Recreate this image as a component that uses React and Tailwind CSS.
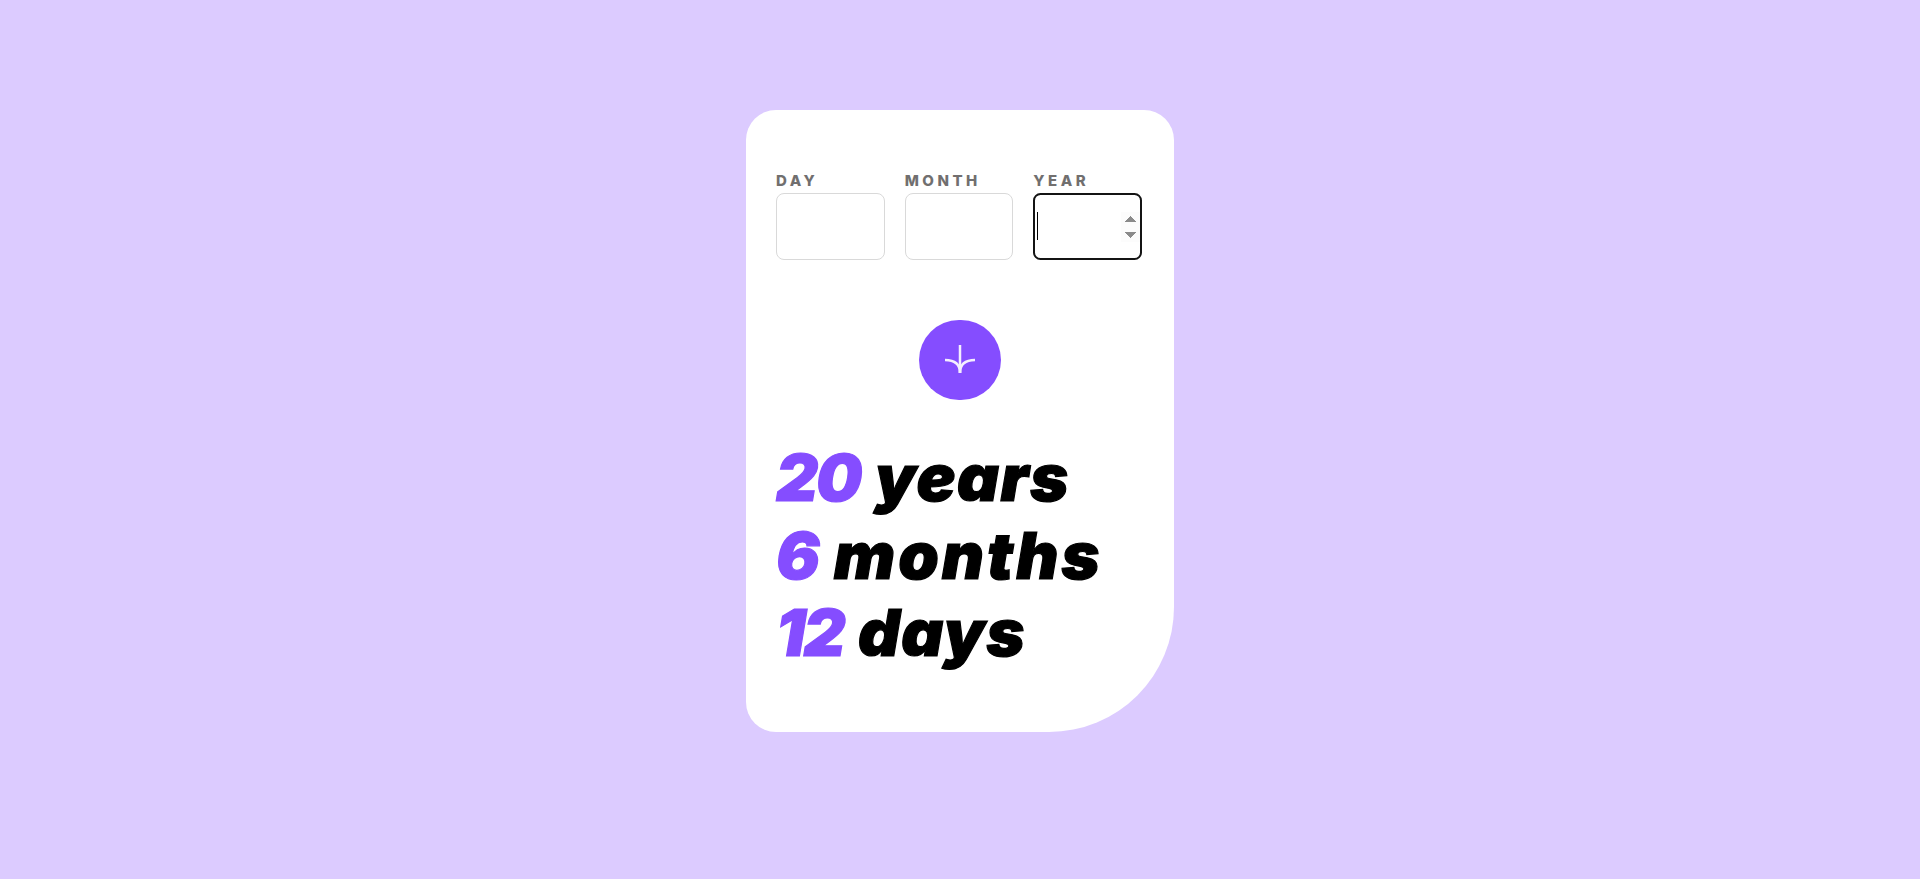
import React from 'react';

const fontStack = "font-['Inter','Roboto',sans-serif]";

const DateField = ({ label, focused }) => (
  <label className="flex flex-col">
    <span className="mt-px mb-[2px] text-[15px] leading-[21px] font-extrabold tracking-[3.5px] text-[#716f6f] uppercase">{label}</span>
    {focused ? (
      <span className="relative block h-[67px]">
        {/* native spinner is drawn bigger in the reference, so the field is zoomed */}
        <input
          type="number"
          autoFocus
          className="h-[53.6px] w-[86.9px] rounded-md border-2 border-[#141414] bg-white pl-[1px] text-xl caret-transparent outline-none [zoom:1.25]"
        />
        <span className="absolute top-[19px] left-[4px] h-[28px] w-px bg-black" />
      </span>
    ) : (
      <input type="number" className="h-[67px] w-full rounded-lg border border-[#d9d9d9] bg-white pl-[2px] text-2xl outline-none" />
    )}
  </label>
);

const Row = ({ value, unit, spacing }) => (
  <p className={`text-[65px] leading-[77.5px] font-black text-black italic [-webkit-text-stroke:1.2px_black] ${spacing}`}>
    <span className="tracking-[-2px] text-[#854dff] [-webkit-text-stroke:1.2px_#854dff]">{value}</span> {unit}
  </p>
);

export default function App() {
  return (
    <div className={`flex h-screen justify-center overflow-hidden bg-[#dccbff] pt-[110px] ${fontStack}`}>
      <div className="h-[622px] w-[428px] rounded-tl-[30px] rounded-tr-[30px] rounded-br-[125px] rounded-bl-[30px] bg-white pt-[59px] pr-[32px] pl-[30px]">
        <div className="grid grid-cols-3 gap-5">
          <DateField label="Day" />
          <DateField label="Month" />
          <DateField label="Year" focused />
        </div>
        <div className="mt-[60px] flex justify-center pl-[2px]">
          <button className="flex h-[80px] w-[82px] items-center justify-center rounded-full bg-[#854dff]">
            <svg width="32" height="32" viewBox="0 0 32 32" fill="none" stroke="#f4efff" strokeWidth="2.5">
              <path d="M16 1v28" />
              <path d="M1 16c8 0 15 3 15 13" />
              <path d="M31 16c-8 0-15 3-15 13" />
            </svg>
          </button>
        </div>
        <div className="mt-[39px]">
          <Row value="20" unit="years" spacing="tracking-[1.5px]" />
          <Row value="6" unit="months" spacing="tracking-[3px]" />
          <Row value="12" unit="days" spacing="tracking-[1.5px]" />
        </div>
      </div>
    </div>
  );
}
